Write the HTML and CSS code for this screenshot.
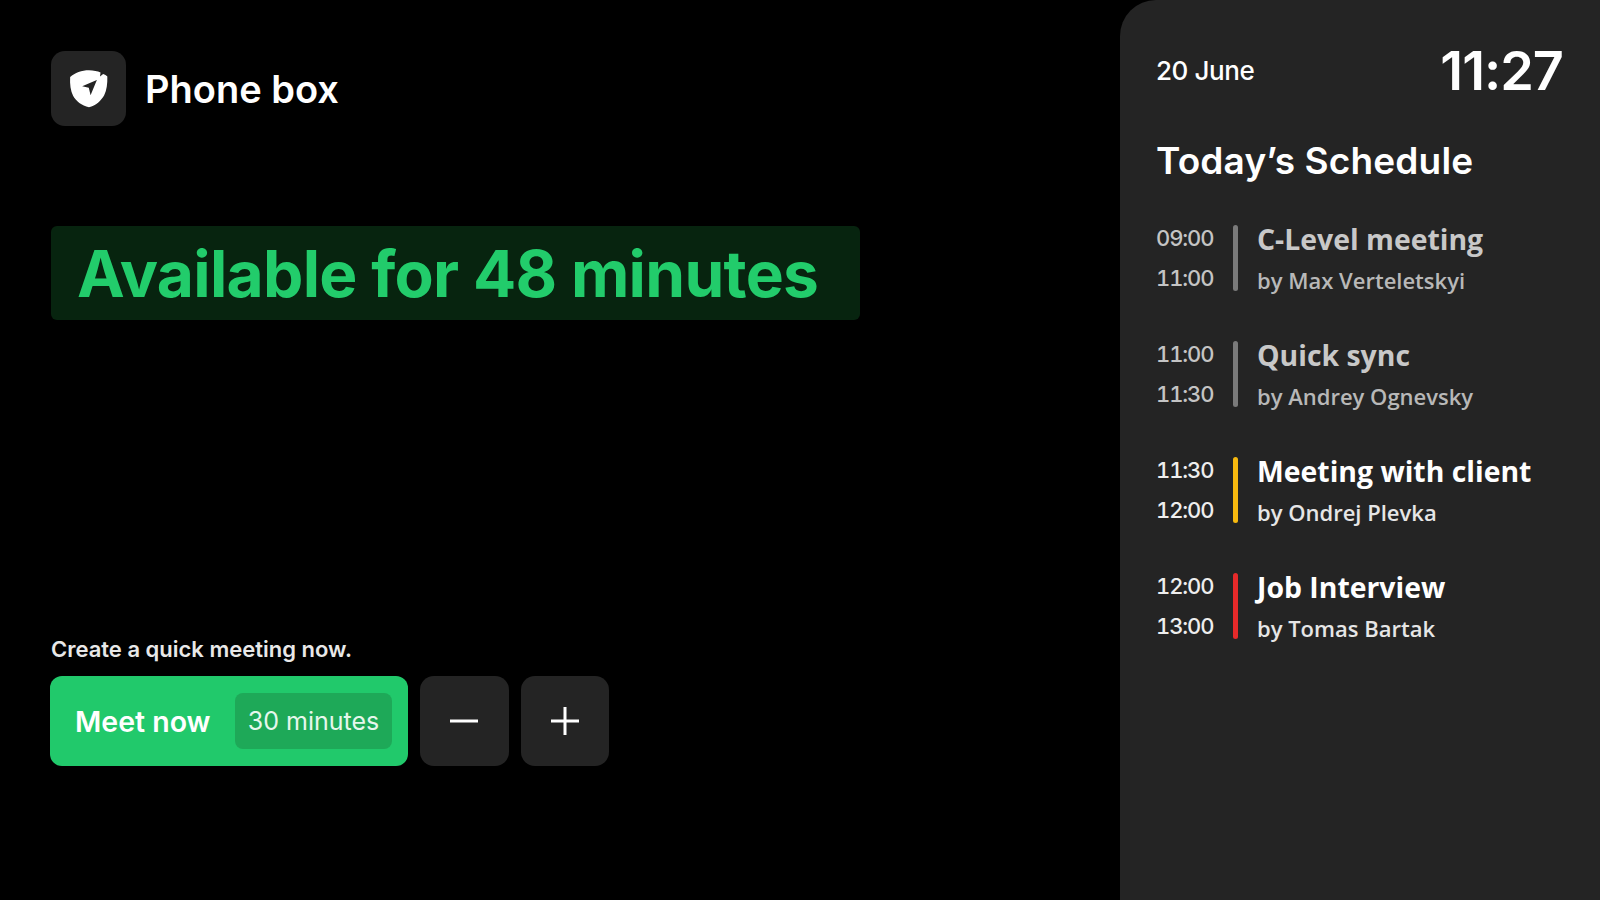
FILE: index.html
```html
<!DOCTYPE html>
<html lang="en">
<head>
    <meta charset="UTF-8">
    <meta name="viewport" content="width=device-width, initial-scale=1.0">
    <title>Phone box</title>
    <link rel="stylesheet" href="styles.css">
</head>
<body>
  <div class="screen">
    <main class="main">
      <div class="brand">
        <div class="brand-icon">
          <svg width="44" height="44" viewBox="0 0 42 42">
            <path fill="#fff" fill-rule="evenodd" d="M21 3c4.500 0 8 .9 11 2.200l-.5 3.800 3-2.400c1.600.5 3 1.300 4 2.400.2 7-.6 13-3 18-2.800 5-8 10-14.500 11.500C14 37 8.500 32.500 5.800 27.500 3.400 22.500 2.600 16.500 3 9.500 7.500 5.500 14 3 21 3zM28.500 12.500l-14 5.800 6.300 1.500 1.700 7.200 6-14.500z"/>
          </svg>
        </div>
        <span class="brand-name">Phone box</span>
      </div>

      <div class="status">Available for 48 minutes</div>

      <div class="quick">
        <p class="quick-label">Create a quick meeting now.</p>
        <div class="quick-row">
          <button class="meet">
            <span>Meet now</span>
            <span class="meet-time">30 minutes</span>
          </button>
          <button class="step">
            <svg width="30" height="30" viewBox="0 0 30 30"><path d="M1 15h28" stroke="#fff" stroke-width="3"/></svg>
          </button>
          <button class="step">
            <svg width="30" height="30" viewBox="0 0 30 30"><path d="M1 15h28M15 1v28" stroke="#fff" stroke-width="3"/></svg>
          </button>
        </div>
      </div>
    </main>

    <aside class="panel">
      <div class="panel-top">
        <span class="date">20 June</span>
        <span class="clock">11:27</span>
      </div>
      <h2 class="panel-title">Today’s Schedule</h2>

      <div class="event past">
        <div class="times"><span>09:00</span><span>11:00</span></div>
        <div class="bar"></div>
        <div class="info">
          <div class="info-title">C-Level meeting</div>
          <div class="info-by">by Max Verteletskyi</div>
        </div>
      </div>
      <div class="event past">
        <div class="times"><span>11:00</span><span>11:30</span></div>
        <div class="bar"></div>
        <div class="info">
          <div class="info-title">Quick sync</div>
          <div class="info-by">by Andrey Ognevsky</div>
        </div>
      </div>
      <div class="event">
        <div class="times"><span>11:30</span><span>12:00</span></div>
        <div class="bar bar-yellow"></div>
        <div class="info">
          <div class="info-title">Meeting with client</div>
          <div class="info-by">by Ondrej Plevka</div>
        </div>
      </div>
      <div class="event">
        <div class="times"><span>12:00</span><span>13:00</span></div>
        <div class="bar bar-red"></div>
        <div class="info">
          <div class="info-title">Job Interview</div>
          <div class="info-by">by Tomas Bartak</div>
        </div>
      </div>
    </aside>
  </div>
</body>
</html>
```

FILE: styles.css
```css
* {
  box-sizing: border-box;
}
body {
  margin: 0;
  background: #000;
  color: #fff;
  font-family: Inter, "Liberation Sans", sans-serif;
}
.screen {
  display: flex;
  width: 1600px;
  height: 900px;
  overflow: hidden;
}

.main {
  flex: 1;
  display: flex;
  flex-direction: column;
  align-items: flex-start;
  padding: 51px 0 0 51px;
}
.brand {
  display: flex;
  align-items: center;
  gap: 19px;
}
.brand-icon {
  width: 75px;
  height: 75px;
  background: #242424;
  border-radius: 14px;
  display: flex;
  align-items: center;
  justify-content: center;
}
.brand-name {
  font-size: 38px;
  font-weight: 600;
}
.status {
  width: 809px;
  height: 94px;
  margin-top: 100px;
  padding-left: 26px;
  display: flex;
  align-items: center;
  background: #07240f;
  border-radius: 6px;
  color: #22cc6b;
  font-size: 64px;
  font-weight: 700;
  letter-spacing: -0.7px;
}
.quick {
  margin-top: 315px;
}
.quick-label {
  margin: 0 0 13px;
  height: 28px;
  line-height: 28px;
  font-size: 22px;
  font-weight: 600;
  color: #e8e8e8;
}
.quick-row {
  display: flex;
  gap: 12px;
  margin-left: -1px;
}
button {
  border: none;
  color: #fff;
  font-family: inherit;
  cursor: pointer;
}
.meet {
  width: 358px;
  height: 90px;
  padding: 0 16px 0 25px;
  display: flex;
  align-items: center;
  justify-content: space-between;
  background: #21c96b;
  border-radius: 12px;
  font-size: 28.5px;
  font-weight: 600;
}
.meet-time {
  width: 157px;
  height: 56px;
  display: flex;
  align-items: center;
  justify-content: center;
  background: #1ea958;
  border-radius: 8px;
  font-size: 25px;
  font-weight: 400;
  color: #e6f7ec;
}
.step {
  width: 88.5px;
  height: 90px;
  display: flex;
  align-items: center;
  justify-content: center;
  background: #242424;
  border-radius: 14px;
}

.panel {
  width: 480px;
  height: 900px;
  padding: 40px 37px 0 36px;
  background: #242424;
  border-top-left-radius: 36px;
}
.panel-top {
  display: flex;
  align-items: center;
  justify-content: space-between;
  height: 60px;
}
.date {
  font-size: 26px;
  font-weight: 500;
  letter-spacing: -0.4px;
}
.clock {
  font-size: 54px;
  font-weight: 600;
  letter-spacing: -1px;
}
.panel-title {
  margin: 39px 0 42px;
  font-size: 37px;
  line-height: 44px;
  font-weight: 600;
  letter-spacing: 0.15px;
}
.event {
  display: flex;
  height: 66px;
  margin-bottom: 50px;
}
.times {
  width: 58px;
  display: flex;
  flex-direction: column;
  justify-content: space-between;
  font-size: 22px;
  font-weight: 500;
  line-height: 26px;
  letter-spacing: -1.1px;
  font-variant-numeric: tabular-nums;
  color: #eee;
}
.bar {
  width: 5px;
  margin: 0 19px 0 19px;
  border-radius: 3px;
  background: #7a7a7a;
}
.bar-yellow {
  background: #f7b90f;
}
.bar-red {
  background: #e62a2a;
}
.info {
  font-family: "Open Sans", "Noto Sans", sans-serif;
  display: flex;
  flex-direction: column;
  justify-content: space-between;
  margin: -4px 0 -4px;
}
.info-title {
  font-size: 28.4px;
  line-height: 36px;
  font-weight: 700;
}
.info-by {
  font-size: 22px;
  line-height: 30px;
  font-weight: 600;
  color: #e6e6e6;
}
.past .times {
  color: #c4c4c4;
}
.past .info-title {
  color: #c8c8c8;
}
.past .info-by {
  color: #b8b8b8;
}
```
